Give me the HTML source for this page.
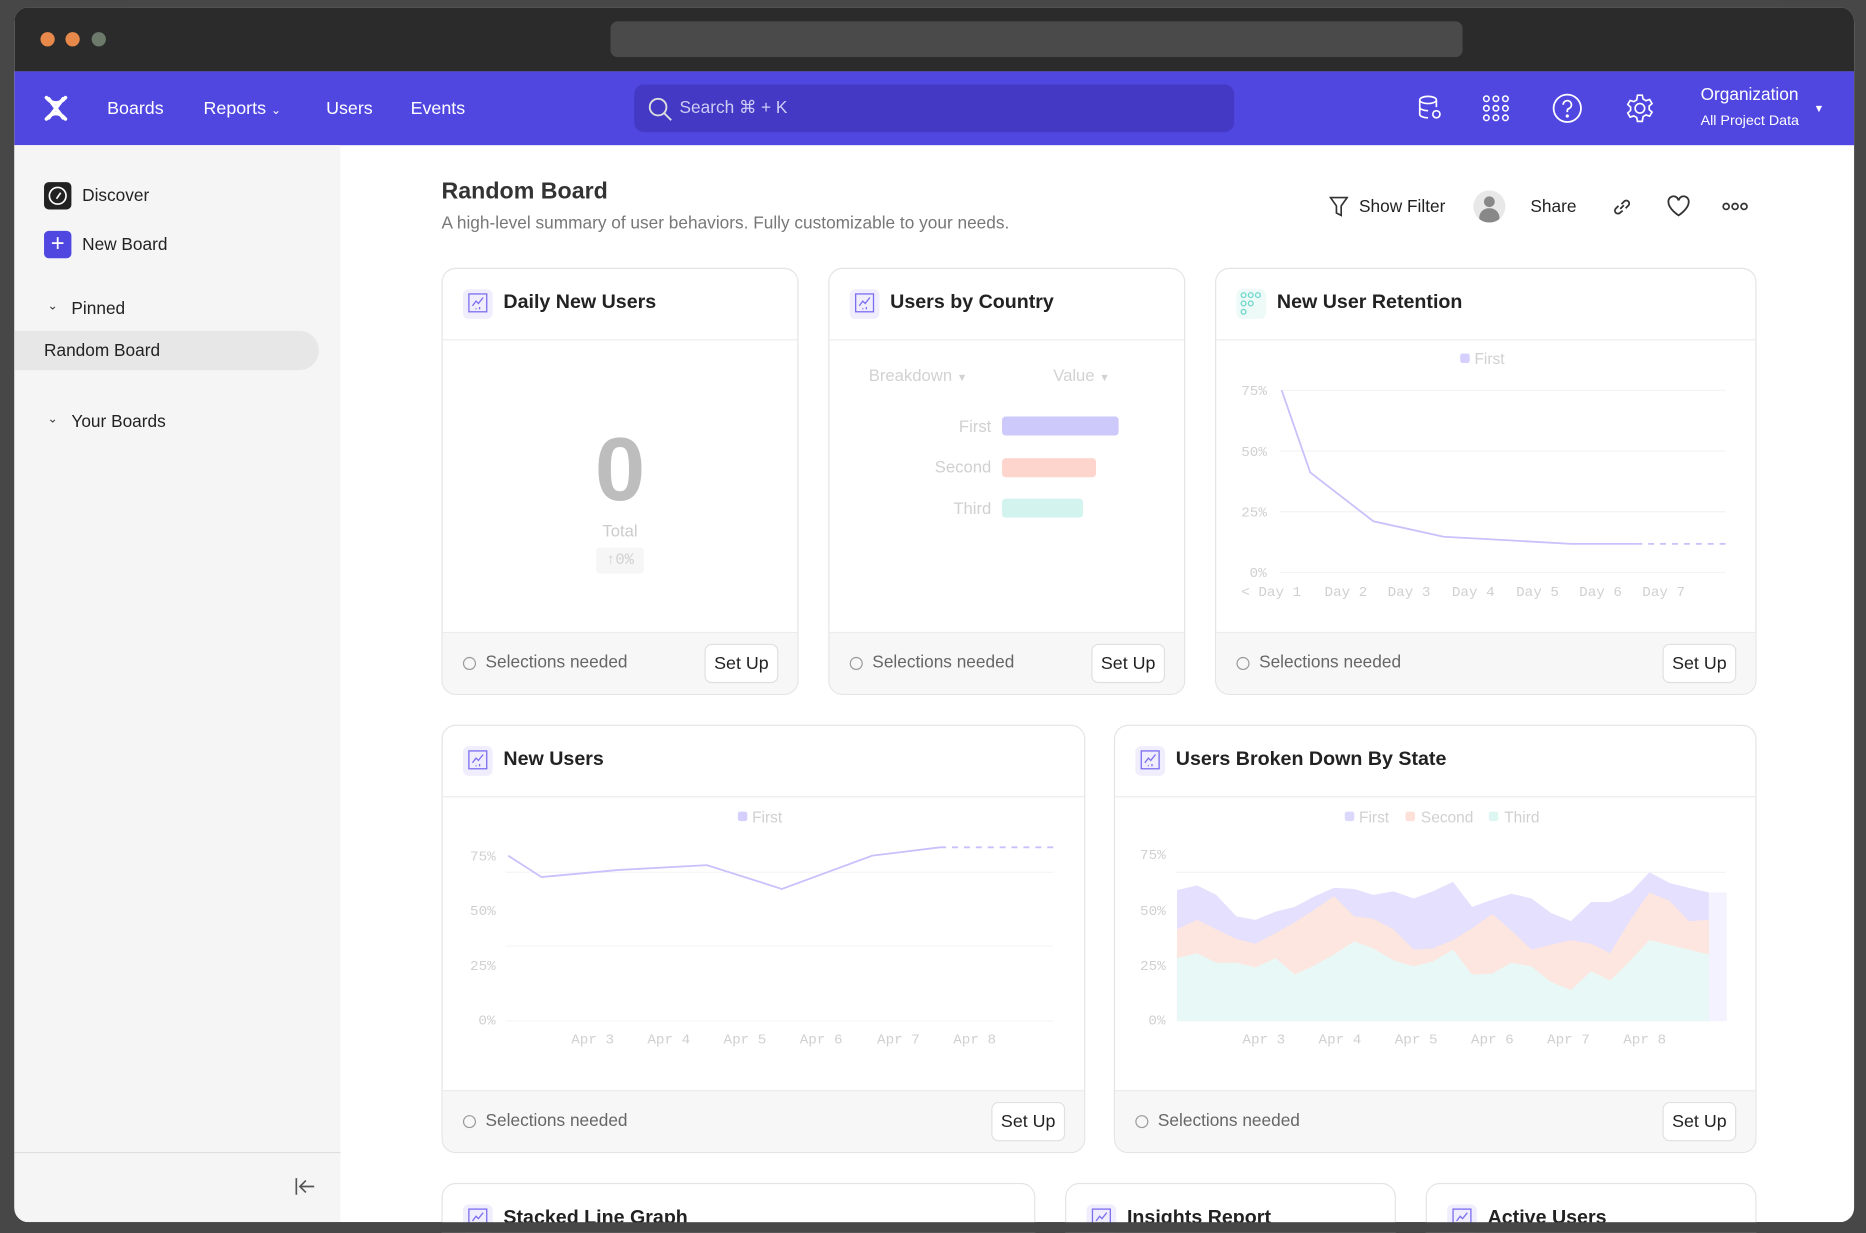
<!DOCTYPE html>
<html><head><meta charset="utf-8"><style>
*{box-sizing:border-box;margin:0;padding:0}
html,body{width:1866px;height:1232px;overflow:hidden;background:#474747}
body{font-family:"Liberation Sans",sans-serif}
#s{position:absolute;left:0;top:0;width:1568px;height:1036px;overflow:hidden;transform:scale(1.19005);transform-origin:0 0}
.a{position:absolute}
.win{left:12px;top:6px;width:1546px;height:1021px;border-radius:12px;overflow:hidden;background:#fff}
.nav{color:#fff;font-size:15px}
.card{position:absolute;border:1px solid #e4e4e4;border-radius:12px;background:#fff;overflow:hidden}
.hd{position:absolute;left:0;right:0;top:0;height:60px;border-bottom:1px solid #ececec}
.ic{position:absolute;left:17px;top:17px;width:25px;height:25px;border-radius:5px;background:#f0eefd}
.tt{position:absolute;left:51px;top:19px;font-size:16.5px;font-weight:bold;color:#222}
.ft{position:absolute;left:0;right:0;bottom:0;height:52px;background:#f7f7f7;border-top:1px solid #ececec}
.sel{position:absolute;left:36px;top:17px;font-size:14.5px;color:#666}
.rad{position:absolute;left:17px;top:20px;width:11px;height:11px;border:1px solid #999;border-radius:50%}
.btn{position:absolute;right:16px;top:9px;width:62px;height:33px;border:1px solid #e0e0e0;border-radius:6px;background:#fff;font-size:15px;color:#222;text-align:center;line-height:31px}
.mono{font-family:"Liberation Mono",monospace}
</style></head><body><div id="s">
<div class="a win">
 <div class="a" style="left:0;top:0;width:1546px;height:54px;background:#2b2b2b"></div>
 <div class="a" style="left:22px;top:21px;width:12px;height:12px;border-radius:50%;background:#e8894c"></div>
 <div class="a" style="left:43px;top:21px;width:12px;height:12px;border-radius:50%;background:#e8894c"></div>
 <div class="a" style="left:65px;top:21px;width:12px;height:12px;border-radius:50%;background:#6c7a6c"></div>
 <div class="a" style="left:501px;top:12px;width:716px;height:30px;border-radius:6px;background:#4a4a4a"></div>
 <div class="a" style="left:0;top:54px;width:1546px;height:62px;background:#5046e0"></div>
 <svg class="a" style="left:24px;top:74px" width="22" height="22" viewBox="0 0 22 22"><path d="M3 2 C8 8 14 8 19 2 M3 20 C8 14 14 14 19 20 M5 3 L11 11 L17 3 M5 19 L11 11 L17 19" stroke="#fff" stroke-width="3" fill="none" stroke-linecap="round"/></svg>
 <div class="a nav" style="left:78px;top:77px">Boards</div>
 <div class="a nav" style="left:159px;top:77px">Reports <span style="font-size:10px">&#8964;</span></div>
 <div class="a nav" style="left:262px;top:77px">Users</div>
 <div class="a nav" style="left:333px;top:77px">Events</div>
 <div class="a" style="left:521px;top:65px;width:504px;height:40px;border-radius:8px;background:#4339c4"></div>
 <svg class="a" style="left:532px;top:75px" width="22" height="22" viewBox="0 0 22 22"><circle cx="9" cy="9" r="7" stroke="#ddd" stroke-width="1.6" fill="none"/><path d="M14 14 L20 20" stroke="#ddd" stroke-width="1.6"/></svg>
 <div class="a" style="left:559px;top:77px;font-size:14.5px;color:#cfccf5">Search ⌘ + K</div>
 <svg class="a" style="left:1178px;top:73px" width="24" height="24" viewBox="0 0 24 24" fill="none" stroke="#fff" stroke-width="1.4"><ellipse cx="10" cy="5" rx="7" ry="3"/><path d="M3 5v12c0 1.6 3 3 7 3M17 5v6M3 11c0 1.6 3 3 7 3"/><circle cx="17" cy="17" r="3"/></svg>
 <svg class="a" style="left:1233px;top:73px" width="24" height="24" viewBox="0 0 24 24" fill="none" stroke="#fff" stroke-width="1.3"><circle cx="4" cy="4" r="2.3"/><circle cx="12" cy="4" r="2.3"/><circle cx="20" cy="4" r="2.3"/><circle cx="4" cy="12" r="2.3"/><circle cx="12" cy="12" r="2.3"/><circle cx="20" cy="12" r="2.3"/><circle cx="4" cy="20" r="2.3"/><circle cx="12" cy="20" r="2.3"/><circle cx="20" cy="20" r="2.3"/></svg>
 <svg class="a" style="left:1292px;top:72px" width="26" height="26" viewBox="0 0 26 26" fill="none" stroke="#fff" stroke-width="1.5"><circle cx="13" cy="13" r="11.5"/><path d="M9.5 10a3.5 3.5 0 1 1 4.5 3.4c-.8.3-1 .9-1 1.8v1"/><circle cx="13" cy="19.5" r=".6" fill="#fff"/></svg>
 <svg class="a" style="left:1353px;top:72px" width="26" height="26" viewBox="0 0 26 26" fill="none" stroke="#fff" stroke-width="1.4"><circle cx="13" cy="13" r="4"/><path d="M11 2h4l.7 3.2 2.4 1.4 3.1-1 2 3.4-2.4 2.2v2.8l2.4 2.2-2 3.4-3.1-1-2.4 1.4L15 24h-4l-.7-3.2-2.4-1.4-3.1 1-2-3.4 2.4-2.2v-2.8L2.8 9.8l2-3.4 3.1 1 2.4-1.4z"/></svg>
 <div class="a" style="left:1417px;top:66px;font-size:14.5px;color:#fff">Organization</div>
 <div class="a" style="left:1417px;top:88px;font-size:12px;color:#fff">All Project Data</div>
 <div class="a" style="left:1512px;top:80px;font-size:9px;color:#fff">▼</div>
 <div class="a" style="left:0;top:116px;width:274px;height:905px;background:#f5f5f5"></div>
 <div class="a" style="left:0;top:962px;width:274px;height:1px;background:#dedede"></div>
 <svg class="a" style="left:234px;top:981px" width="20" height="20" viewBox="0 0 20 20" fill="none" stroke="#555" stroke-width="1.4"><path d="M3 3v14M18 10H7M11 5l-5 5 5 5"/></svg>
 <div class="a" style="left:25px;top:147px;width:23px;height:23px;border-radius:4px;background:#222"></div>
 <svg class="a" style="left:25px;top:147px" width="23" height="23" viewBox="0 0 23 23" fill="none" stroke="#fff" stroke-width="1.4"><circle cx="11.5" cy="11.5" r="7"/><path d="M14 9l-3.5 5"/></svg>
 <div class="a" style="left:57px;top:151px;font-size:14.5px;color:#222">Discover</div>
 <div class="a" style="left:25px;top:188px;width:23px;height:23px;border-radius:4px;background:#5046e0;color:#fff;text-align:center;font-size:20px;line-height:22px">+</div>
 <div class="a" style="left:57px;top:192px;font-size:14.5px;color:#222">New Board</div>
 <div class="a" style="left:28px;top:246px;font-size:10px;color:#333">&#8964;</div>
 <div class="a" style="left:48px;top:246px;font-size:14.5px;color:#222">Pinned</div>
 <div class="a" style="left:0;top:272px;width:256px;height:33px;border-radius:0 17px 17px 0;background:#e7e7e7"></div>
 <div class="a" style="left:25px;top:281px;font-size:14.5px;color:#222">Random Board</div>
 <div class="a" style="left:28px;top:341px;font-size:10px;color:#333">&#8964;</div>
 <div class="a" style="left:48px;top:341px;font-size:14.5px;color:#222">Your Boards</div>
</div>
<div class="a" style="left:371px;top:150px;font-size:19.5px;font-weight:bold;color:#333">Random Board</div>
<div class="a" style="left:371px;top:180px;font-size:14.5px;color:#777">A high-level summary of user behaviors. Fully customizable to your needs.</div>
<svg class="a" style="left:1117px;top:165px" width="16" height="18" viewBox="0 0 16 18" fill="none" stroke="#333" stroke-width="1.4"><path d="M1 1h14l-5 7v8l-4-2V8z"/></svg>
<div class="a" style="left:1142px;top:166px;font-size:14.5px;color:#222">Show Filter</div>
<div class="a" style="left:1238px;top:160px;width:27px;height:27px;border-radius:50%;background:#e8e8e8;overflow:hidden"><div class="a" style="left:9px;top:5px;width:9px;height:9px;border-radius:50%;background:#888"></div><div class="a" style="left:5px;top:15px;width:17px;height:14px;border-radius:8px 8px 0 0;background:#888"></div></div>
<div class="a" style="left:1286px;top:166px;font-size:14.5px;color:#222">Share</div>
<svg class="a" style="left:1354px;top:165px" width="18" height="18" viewBox="0 0 18 18" fill="none" stroke="#333" stroke-width="1.5"><path d="M7.5 10.5l3-3M6 8L3.5 10.5a2.5 2.5 0 0 0 3.5 3.5L9.5 12M12 10l2.5-2.5A2.5 2.5 0 0 0 11 4L8.5 6.5"/></svg>
<svg class="a" style="left:1400px;top:164px" width="21" height="19" viewBox="0 0 21 19" fill="none" stroke="#333" stroke-width="1.5"><path d="M10.5 17S2 11.5 2 6a4.2 4.2 0 0 1 8.5-1.5A4.2 4.2 0 0 1 19 6c0 5.5-8.5 11-8.5 11z"/></svg>
<svg class="a" style="left:1447px;top:169px" width="22" height="9" viewBox="0 0 22 9" fill="none" stroke="#333" stroke-width="1.4"><circle cx="3.5" cy="4.5" r="2.5"/><circle cx="11" cy="4.5" r="2.5"/><circle cx="18.5" cy="4.5" r="2.5"/></svg>

<div class="card" style="left:371px;top:225px;width:300px;height:359px"><div class="hd"><div class="ic"></div><div class="tt">Daily New Users</div></div>
 <div class="a" style="left:0;width:298px;top:125px;text-align:center;font-size:76px;font-weight:bold;color:#bdbdbd">0</div>
 <div class="a" style="left:0;width:298px;top:212px;text-align:center;font-size:14px;color:#ccc">Total</div>
 <div class="a mono" style="left:129px;width:40px;top:234px;height:22px;background:#f6f6f6;border-radius:3px;text-align:center;font-size:13px;line-height:22px;color:#d0d0d0">↑0%</div>
 <div class="ft"><div class="rad"></div><div class="sel">Selections needed</div><div class="btn">Set Up</div></div></div>
<div class="card" style="left:696px;top:225px;width:300px;height:359px"><div class="hd"><div class="ic"></div><div class="tt">Users by Country</div></div>
 <div class="a" style="left:33px;top:81px;font-size:14px;color:#d2d2d2">Breakdown <span style="font-size:9px">▼</span></div>
 <div class="a" style="left:188px;top:81px;font-size:14px;color:#d2d2d2">Value <span style="font-size:9px">▼</span></div>
 <div class="a" style="left:60px;width:76px;text-align:right;top:124px;font-size:14px;color:#d0d0d0">First</div>
 <div class="a" style="left:60px;width:76px;text-align:right;top:158px;font-size:14px;color:#d0d0d0">Second</div>
 <div class="a" style="left:60px;width:76px;text-align:right;top:193px;font-size:14px;color:#d0d0d0">Third</div>
 <div class="a" style="left:145px;top:124px;width:98px;height:16px;border-radius:3px;background:#cec9fb"></div>
 <div class="a" style="left:145px;top:159px;width:79px;height:16px;border-radius:3px;background:#fdd5cc"></div>
 <div class="a" style="left:145px;top:193px;width:68px;height:16px;border-radius:3px;background:#d2f3ee"></div>
 <div class="ft"><div class="rad"></div><div class="sel">Selections needed</div><div class="btn">Set Up</div></div></div>
<div class="card" style="left:1021px;top:225px;width:455px;height:359px"><div class="hd"><div class="ic" style="background:#eefaf8"></div><div class="tt">New User Retention</div></div>
 <div class="ft"><div class="rad"></div><div class="sel">Selections needed</div><div class="btn">Set Up</div></div></div>
<div class="card" style="left:371px;top:609px;width:541px;height:360px"><div class="hd"><div class="ic"></div><div class="tt">New Users</div></div>
 <div class="ft"><div class="rad"></div><div class="sel">Selections needed</div><div class="btn">Set Up</div></div></div>
<div class="card" style="left:936px;top:609px;width:540px;height:360px"><div class="hd"><div class="ic"></div><div class="tt">Users Broken Down By State</div></div>
 <div class="ft"><div class="rad"></div><div class="sel">Selections needed</div><div class="btn">Set Up</div></div></div>
<div class="card" style="left:371px;top:994px;width:499px;height:80px;border-radius:12px 12px 0 0"><div class="hd" style="border:0"><div class="ic"></div><div class="tt">Stacked Line Graph</div></div></div>
<div class="card" style="left:895px;top:994px;width:278px;height:80px;border-radius:12px 12px 0 0"><div class="hd" style="border:0"><div class="ic"></div><div class="tt">Insights Report</div></div></div>
<div class="card" style="left:1198px;top:994px;width:278px;height:80px;border-radius:12px 12px 0 0"><div class="hd" style="border:0"><div class="ic"></div><div class="tt">Active Users</div></div></div>

<svg class="a" style="left:0;top:0" width="1568" height="1035" viewBox="0 0 1568 1035" font-family="Liberation Mono, monospace" font-size="12" fill="#d0d0d0">
 <g fill="none" stroke="#7b6ff0" stroke-width="1.1">
  <g id="ci"><rect x="394" y="247" width="15" height="15"/><path d="M397 257l3-4 2 2 4-5M397 260v0M400 260v-1M403 260v-2" /></g>
  <use href="#ci" x="325"/><use href="#ci" x="0" y="384"/><use href="#ci" x="565" y="384"/>
  <use href="#ci" x="0" y="769"/><use href="#ci" x="524" y="769"/><use href="#ci" x="827" y="769"/>
 </g>
 <g fill="none" stroke="#6fd8cc" stroke-width="1.1"><circle cx="1045" cy="248" r="2"/><circle cx="1051" cy="248" r="2"/><circle cx="1057" cy="248" r="2"/><circle cx="1045" cy="255" r="2"/><circle cx="1051" cy="255" r="2"/><circle cx="1045" cy="262" r="2"/></g>
 <rect x="1227" y="297" width="8" height="8" rx="2" fill="#d4cffc"/><text x="1239" y="306" font-family="Liberation Sans" font-size="13">First</text>
 <g stroke="#f3f3f3"><path d="M1075 328H1450M1075 379H1450M1075 430H1450M1075 481H1450"/></g>
 <text x="1043" y="332">75%</text><text x="1043" y="383">50%</text><text x="1043" y="434">25%</text><text x="1050" y="485">0%</text>
 <polyline points="1077,328 1101,397 1154,438 1213,451 1267,454 1320,457 1375,457" fill="none" stroke="#c8c1fb" stroke-width="1.5"/>
 <path d="M1375 457H1450" stroke="#c8c1fb" stroke-width="1.5" stroke-dasharray="5 5"/>
 <text x="1043" y="501">&lt; Day 1</text><text x="1113" y="501">Day 2</text><text x="1166" y="501">Day 3</text><text x="1220" y="501">Day 4</text><text x="1274" y="501">Day 5</text><text x="1327" y="501">Day 6</text><text x="1380" y="501">Day 7</text>
 <rect x="620" y="682" width="8" height="8" rx="2" fill="#d4cffc"/><text x="632" y="691" font-family="Liberation Sans" font-size="13">First</text>
 <g stroke="#f5f5f5"><path d="M425 733H885M425 795H885M425 858H885"/></g>
 <text x="395" y="723">75%</text><text x="395" y="769">50%</text><text x="395" y="815">25%</text><text x="402" y="861">0%</text>
 <polyline points="427,719 455,737 520,731 594,727 657,747 733,719 790,712" fill="none" stroke="#c8c1fb" stroke-width="1.5"/>
 <path d="M790 712H885" stroke="#c8c1fb" stroke-width="1.5" stroke-dasharray="5 5"/>
 <text x="480" y="877">Apr 3</text><text x="544" y="877">Apr 4</text><text x="608" y="877">Apr 5</text><text x="672" y="877">Apr 6</text><text x="737" y="877">Apr 7</text><text x="801" y="877">Apr 8</text>
 <rect x="1130" y="682" width="8" height="8" rx="2" fill="#dcd8fc"/><text x="1142" y="691" font-family="Liberation Sans" font-size="13">First</text>
 <rect x="1181" y="682" width="8" height="8" rx="2" fill="#fde0d8"/><text x="1194" y="691" font-family="Liberation Sans" font-size="13">Second</text>
 <rect x="1251" y="682" width="8" height="8" rx="2" fill="#def6f2"/><text x="1264" y="691" font-family="Liberation Sans" font-size="13">Third</text>
 <text x="958" y="722">75%</text><text x="958" y="769">50%</text><text x="958" y="815">25%</text><text x="965" y="861">0%</text>
 <path d="M988 733H1450" stroke="#f3f3f3"/>
 <polygon fill="#e4e0fd" points="989,748 1006,744 1022,752 1039,770 1055,773 1072,766 1088,762 1105,753 1121,746 1138,747 1154,752 1171,749 1188,755 1204,749 1221,741 1237,762 1254,756 1270,751 1287,755 1303,767 1320,774 1337,758 1353,758 1370,750 1386,733 1403,742 1419,746 1436,750 1436,858 989,858"/>
 <polygon fill="#fde6df" points="989,781 1006,773 1022,781 1039,789 1055,793 1072,784 1088,775 1105,764 1121,753 1138,770 1154,772 1171,781 1188,798 1204,797 1221,790 1237,780 1254,768 1270,782 1287,798 1303,794 1320,790 1337,793 1353,801 1370,773 1386,750 1403,757 1419,774 1436,773 1436,858 989,858"/>
 <polygon fill="#e8f8f6" points="989,805 1006,801 1022,809 1039,809 1055,813 1072,805 1088,819 1105,811 1121,802 1138,791 1154,797 1171,807 1188,812 1204,808 1221,798 1237,819 1254,818 1270,809 1287,812 1303,825 1320,832 1337,816 1353,824 1370,807 1386,790 1403,794 1419,798 1436,802 1436,858 989,858"/>
 <rect x="1436" y="750" width="15" height="108" fill="#f4f2fe"/>
 <text x="1044" y="877">Apr 3</text><text x="1108" y="877">Apr 4</text><text x="1172" y="877">Apr 5</text><text x="1236" y="877">Apr 6</text><text x="1300" y="877">Apr 7</text><text x="1364" y="877">Apr 8</text>
</svg>
<div class="a" style="left:0;top:1027px;width:1568px;height:20px;background:#474747"></div>
</div></body></html>
